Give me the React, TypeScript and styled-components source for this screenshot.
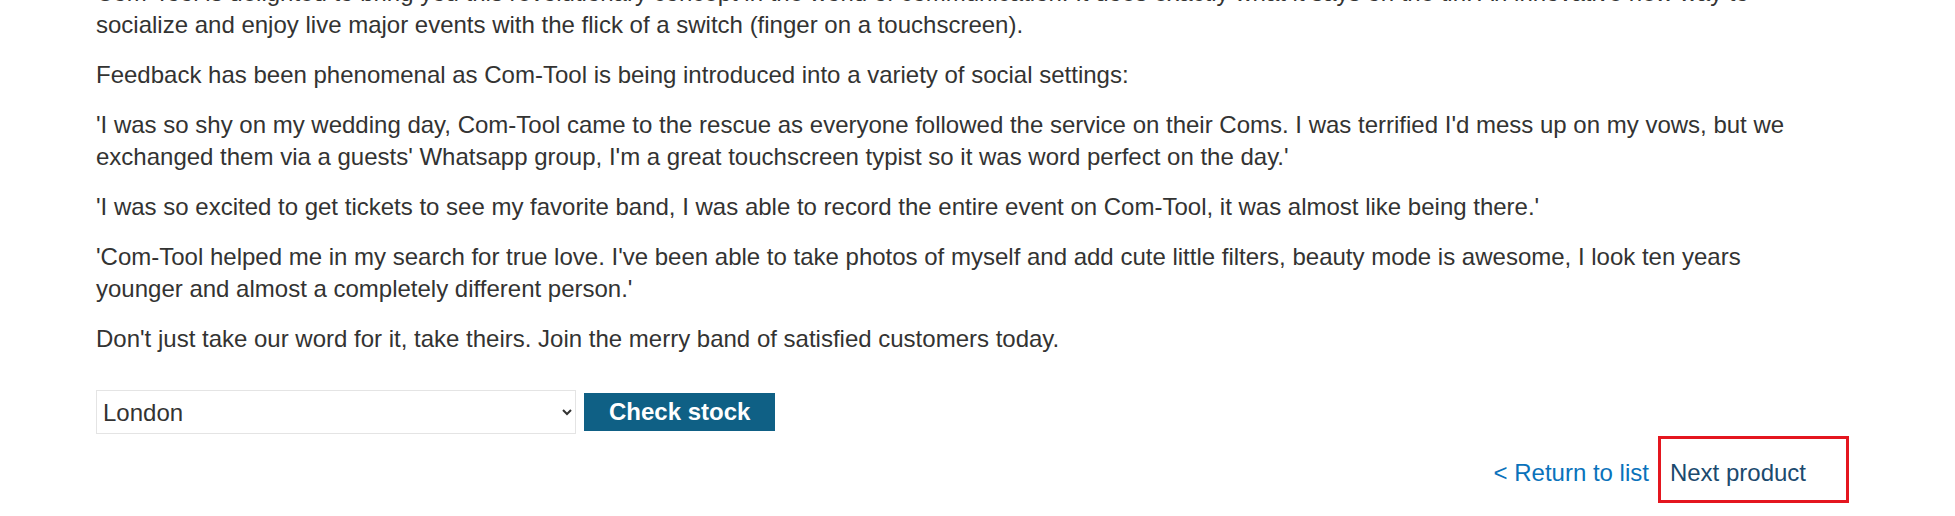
import React from "react";
import styled, { createGlobalStyle } from "styled-components";

const GlobalStyle = createGlobalStyle`
  html, body {
    margin: 0;
    padding: 0;
    background: #ffffff;
  }
  body {
    font-family: "Liberation Sans", Arial, sans-serif;
    color: #333332;
    overflow: hidden;
  }
`;

const Page = styled.main`
  width: 1955px;
  height: 516px;
  overflow: hidden;
  box-sizing: border-box;
  padding: 0 106px 0 96px;
`;

const Description = styled.section`
  margin-top: -23px;
  padding-right: 22px;
`;

const Paragraph = styled.p`
  margin: 0 0 18px;
  font-size: 24px;
  line-height: 32px;
`;

const StockForm = styled.form`
  display: flex;
  align-items: center;
  gap: 8px;
  margin-top: 35px;
`;

const StoreSelect = styled.select`
  width: 480px;
  height: 44px;
  box-sizing: border-box;
  border: 1px solid #e4e4e4;
  border-radius: 0;
  background: #ffffff;
  color: #333332;
  font-family: "Liberation Sans", Arial, sans-serif;
  font-size: 24px;
  padding: 0 12px 0 2px;
  outline: none;
`;

const CheckButton = styled.button`
  height: 38px;
  box-sizing: border-box;
  padding: 0 25px;
  border: none;
  border-radius: 0;
  background: #0f6085;
  color: #ffffff;
  font-family: "Liberation Sans", Arial, sans-serif;
  font-weight: bold;
  font-size: 24px;
  line-height: 38px;
  cursor: pointer;
`;

const LinkRow = styled.nav`
  display: flex;
  justify-content: flex-end;
  align-items: baseline;
  gap: 9px;
  margin-top: 2px;
`;

const NavLink = styled.a<{ $highlight?: boolean }>`
  display: inline-block;
  font-size: 24px;
  line-height: 32px;
  text-decoration: none;
  color: ${(p) => (p.$highlight ? "#1b4a6e" : "#0a72bb")};
  ${(p) =>
    p.$highlight
      ? `
    border: 3px solid #e4161f;
    padding: 18px 40px 11px 9px;
  `
      : ""}
`;

export default function App() {
  return (
    <>
      <GlobalStyle />
      <Page>
        <Description>
          <Paragraph>
            Com-Tool is delighted to bring you this revolutionary concept in the world of
            communication. It does exactly what it says on the tin. An innovative new way to
            socialize and enjoy live major events with the flick of a switch (finger on a
            touchscreen).
          </Paragraph>
          <Paragraph>
            Feedback has been phenomenal as Com-Tool is being introduced into a variety of social
            settings:
          </Paragraph>
          <Paragraph>
            'I was so shy on my wedding day, Com-Tool came to the rescue as everyone followed the
            service on their Coms. I was terrified I'd mess up on my vows, but we exchanged them
            via a guests' Whatsapp group, I'm a great touchscreen typist so it was word perfect on
            the day.'
          </Paragraph>
          <Paragraph>
            'I was so excited to get tickets to see my favorite band, I was able to record the
            entire event on Com-Tool, it was almost like being there.'
          </Paragraph>
          <Paragraph>
            'Com-Tool helped me in my search for true love. I've been able to take photos of myself
            and add cute little filters, beauty mode is awesome, I look ten years younger and
            almost a completely different person.'
          </Paragraph>
          <Paragraph>
            Don't just take our word for it, take theirs. Join the merry band of satisfied
            customers today.
          </Paragraph>
        </Description>
        <StockForm onSubmit={(e) => e.preventDefault()}>
          <StoreSelect defaultValue="1">
            <option value="1">London</option>
            <option value="2">Paris</option>
            <option value="3">Milan</option>
          </StoreSelect>
          <CheckButton type="submit">Check stock</CheckButton>
        </StockForm>
        <LinkRow>
          <NavLink href="#">&lt; Return to list</NavLink>
          <NavLink href="#" $highlight>
            Next product
          </NavLink>
        </LinkRow>
      </Page>
    </>
  );
}
